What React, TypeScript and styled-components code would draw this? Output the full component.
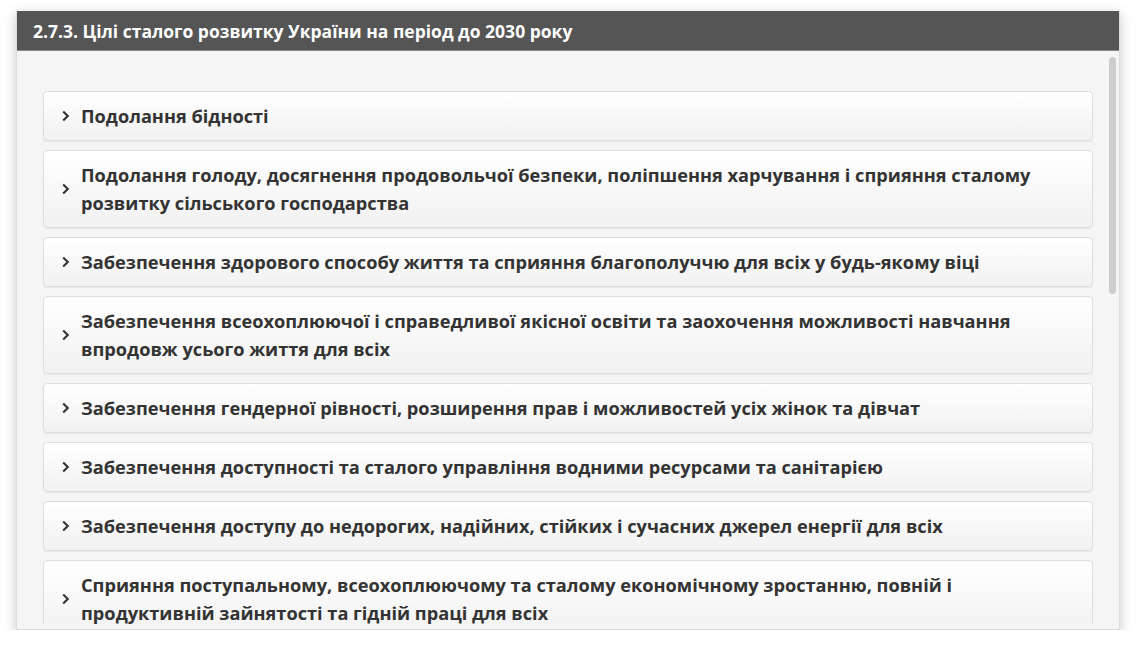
import React from "react";
import styled, { createGlobalStyle } from "styled-components";

const GlobalStyle = createGlobalStyle`
  html, body { margin: 0; padding: 0; background: #ffffff; }
  body { font-family: "Open Sans", "Noto Sans", sans-serif; }
`;

const Page = styled.div`
  padding: 11px 16px 0 16px;
`;

const Window = styled.div`
  width: 1104px;
  height: 619px;
  display: flex;
  flex-direction: column;
  background: #f5f5f5;
  box-shadow: 0 3px 12px rgba(0, 0, 0, 0.22);
  border: 1px solid #dcdcdc;
  border-top: none;
  box-sizing: border-box;
`;

const Header = styled.div`
  height: 40px;
  flex-shrink: 0;
  background: #555555;
  color: #ffffff;
  display: flex;
  align-items: center;
  padding-left: 16px;
  font-size: 17.5px;
  font-weight: 700;
  border-bottom: 1px solid #888;
  box-sizing: border-box;
`;

const Body = styled.div`
  flex: 1;
  display: flex;
  min-height: 0;
  padding-bottom: 5px;
`;

const Content = styled.div`
  flex: 1;
  overflow: hidden;
  padding: 40px 0 0 26px;
  display: flex;
  flex-direction: column;
  gap: 9px;
`;

const ScrollTrack = styled.div`
  width: 7px;
  margin: 6px 3px 0 16px;
  flex-shrink: 0;
`;

const ScrollThumb = styled.div`
  height: 237px;
  background: #cdcdcd;
  border-radius: 4px;
`;

const Item = styled.div`
  width: 1050px;
  flex-shrink: 0;
  box-sizing: border-box;
  border: 1px solid #dedede;
  border-radius: 4px;
  background: linear-gradient(#ffffff, #f1f1f1);
  box-shadow: 0 1px 2px rgba(0, 0, 0, 0.06);
  display: flex;
  align-items: center;
  padding: 10px 20px 10px 17px;
  gap: 11px;
`;

const Chevron = styled.svg`
  width: 9px;
  height: 12px;
  flex-shrink: 0;
`;

const Title = styled.span`
  font-size: 18.2px;
  line-height: 28px;
  font-weight: 700;
  color: #333333;
`;

const goals = [
  "Подолання бідності",
  "Подолання голоду, досягнення продовольчої безпеки, поліпшення харчування і сприяння сталому розвитку сільського господарства",
  "Забезпечення здорового способу життя та сприяння благополуччю для всіх у будь-якому віці",
  "Забезпечення всеохоплюючої і справедливої якісної освіти та заохочення можливості навчання впродовж усього життя для всіх",
  "Забезпечення гендерної рівності, розширення прав і можливостей усіх жінок та дівчат",
  "Забезпечення доступності та сталого управління водними ресурсами та санітарією",
  "Забезпечення доступу до недорогих, надійних, стійких і сучасних джерел енергії для всіх",
  "Сприяння поступальному, всеохоплюючому та сталому економічному зростанню, повній і продуктивній зайнятості та гідній праці для всіх",
];

export default function App() {
  return (
    <Page>
      <GlobalStyle />
      <Window>
        <Header>2.7.3. Цілі сталого розвитку України на період до 2030 року</Header>
        <Body>
          <Content>
            {goals.map((g) => (
              <Item key={g}>
                <Chevron viewBox="0 0 9 12">
                  <path d="M2.2 1.4 L6.8 6 L2.2 10.6" fill="none" stroke="#333" strokeWidth="2.1" />
                </Chevron>
                <Title>{g}</Title>
              </Item>
            ))}
          </Content>
          <ScrollTrack>
            <ScrollThumb />
          </ScrollTrack>
        </Body>
      </Window>
    </Page>
  );
}
